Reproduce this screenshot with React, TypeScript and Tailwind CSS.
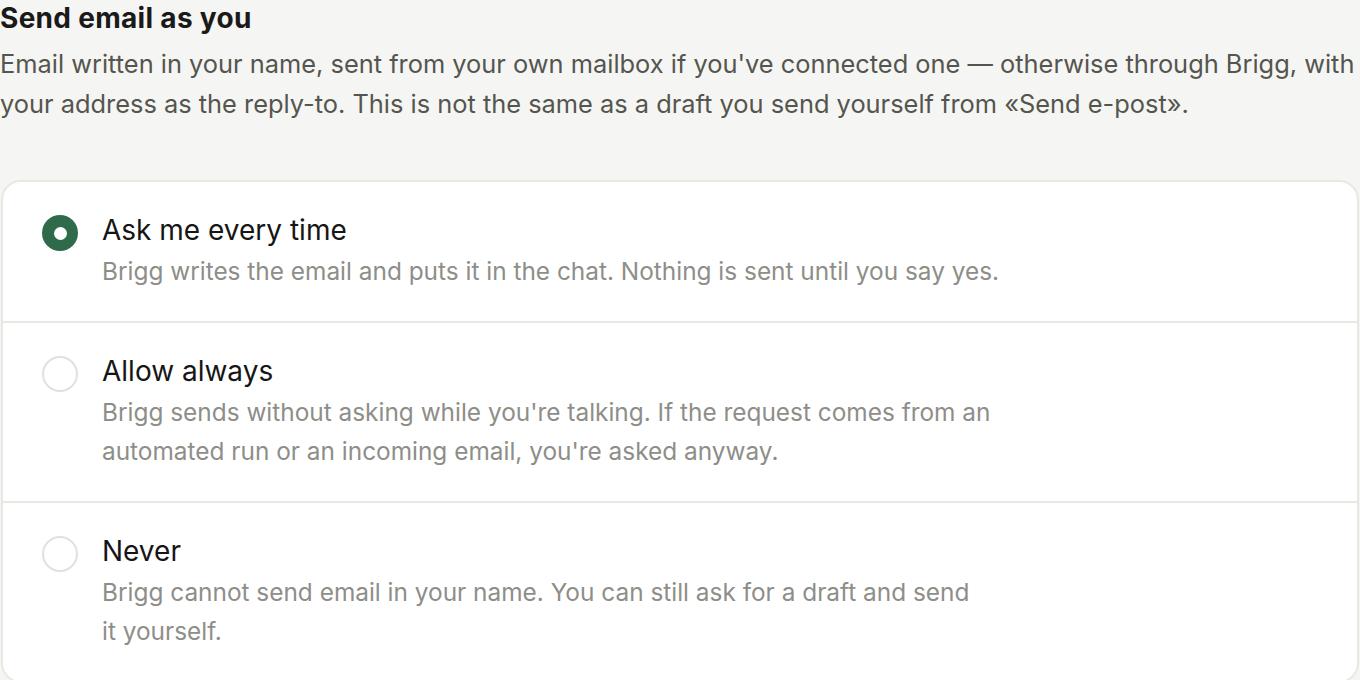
const options = [
  {
    title: 'Ask me every time',
    lines: ['Brigg writes the email and puts it in the chat. Nothing is sent until you say yes.'],
    selected: true,
  },
  {
    title: 'Allow always',
    lines: [
      "Brigg sends without asking while you're talking. If the request comes from an",
      "automated run or an incoming email, you're asked anyway.",
    ],
    selected: false,
  },
  {
    title: 'Never',
    lines: ['Brigg cannot send email in your name. You can still ask for a draft and send', 'it yourself.'],
    selected: false,
  },
];

export default function App() {
  return (
    <div className="min-h-screen bg-[#f5f5f3] font-['Inter',sans-serif] overflow-hidden">
      <h2 className="text-[28px] font-bold leading-[36px] text-[#1a1a1a] tracking-[0.3px]">Send email as you</h2>
      <p className="mt-[8px] text-[25.4px] leading-[40px] text-[#55554f] whitespace-nowrap">
        Email written in your name, sent from your own mailbox if you've connected one — otherwise through Brigg, with
        <br />
        your address as the reply-to. This is not the same as a draft you send yourself from «Send e-post».
      </p>
      <div className="mt-[56px] mx-[1px] bg-white border-2 border-[#e9e8e3] rounded-[20px] overflow-hidden">
        {options.map((o, i) => (
          <div
            key={o.title}
            className={`flex gap-[24px] pl-[39px] pr-8 pt-[28px] pb-[30px] ${i > 0 ? 'border-t-2 border-[#e9e8e3]' : ''}`}
          >
            <div className="pt-[5px] shrink-0">
              {o.selected ? (
                <div className="w-[36px] h-[36px] rounded-full bg-[#2f6b4a] flex items-center justify-center">
                  <div className="w-[13px] h-[13px] rounded-full bg-white" />
                </div>
              ) : (
                <div className="w-[36px] h-[36px] rounded-full border-2 border-[#e2e1dc]" />
              )}
            </div>
            <div>
              <div className="text-[28px] leading-[40px] text-[#161616]">{o.title}</div>
              <div className="mt-[2px] text-[24.4px] leading-[39px] text-[#8e8e89] whitespace-nowrap">
                {o.lines.map((l) => (
                  <div key={l}>{l}</div>
                ))}
              </div>
            </div>
          </div>
        ))}
      </div>
    </div>
  );
}
